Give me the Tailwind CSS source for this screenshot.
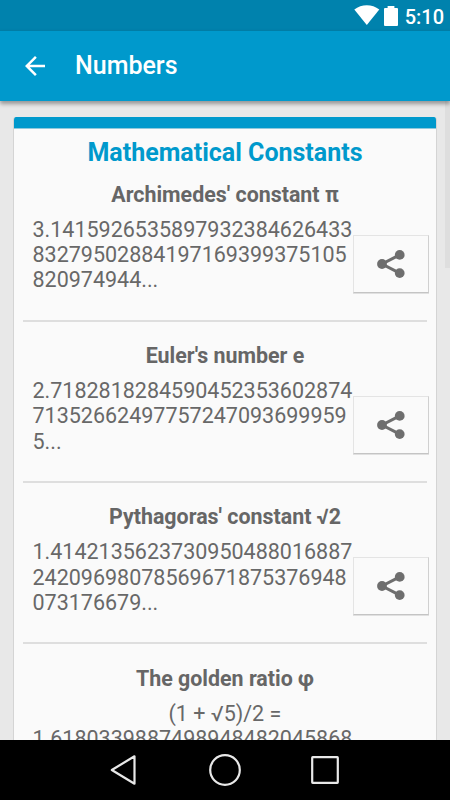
<!DOCTYPE html>
<html lang="en">
<head>
    <meta charset="UTF-8">
    <meta name="viewport" content="width=device-width, initial-scale=1.0">
    <title>Numbers</title>
    <script src="https://cdn.jsdelivr.net/npm/@tailwindcss/browser@4"></script>
</head>
<body class="bg-[#e8e8e8] font-[Roboto,sans-serif]">
    <div class="relative flex flex-col h-[800px] w-[450px] overflow-hidden">
        <!-- Status bar -->
        <div class="flex h-[30px] shrink-0 items-center justify-end bg-[#0082ad] pr-[6px] text-white">
            <svg class="mt-px h-[21px] w-[26px]" viewBox="0 0 26 21" fill="currentColor"><path d="M0.3 4.600C7.500-1.200 18.100-1.200 25.300 4.600L12.800 20Z"/></svg>
            <svg class="ml-[4px] mt-[2px] h-[20px] w-[14px]" viewBox="0 0 14 20" fill="currentColor"><path d="M3.600 0h6.800v2H13a1 1 0 0 1 1 1v16a1 1 0 0 1-1 1H1a1 1 0 0 1-1-1V3a1 1 0 0 1 1-1h2.600z"/></svg>
            <span class="ml-[7px] pt-[3px] text-[20px] font-medium leading-none">5:10</span>
        </div>

        <!-- Toolbar -->
        <header class="relative z-10 flex h-[71px] shrink-0 items-center border-t border-[#007da6] bg-[#0099cc] pl-[20px] text-white shadow-[0_3px_4px_rgba(0,0,0,0.35)]">
            <svg class="h-[30px] w-[30px]" viewBox="0 0 24 24" fill="currentColor"><path d="M20 11H7.830l5.590-5.590L12 4l-8 8 8 8 1.410-1.410L7.830 13H20v-2z"/></svg>
            <h1 class="ml-[25px] text-[25px] font-medium">Numbers</h1>
        </header>

        <main class="relative min-h-0 flex-1 overflow-hidden px-[13px] pt-[16px]">
            <div class="h-[900px] overflow-hidden rounded-t-[3px] border border-t-0 border-[#d4d4d4] bg-[#fafafa]">
                <div class="-mx-px h-[12px] border-b border-[#8fc9dc] bg-[#0099cc]"></div>
                <h2 class="mt-[9px] text-center text-[25px] font-bold leading-[30px] text-[#0099cc]">Mathematical Constants</h2>

                <section class="mx-[9px] mt-[14px] h-[139.700px] border-b-2 border-[#dedede]">
                    <h3 class="text-center text-[21.400px] font-bold leading-[25px] text-[#666]">Archimedes' constant π</h3>
                    <div class="mt-[10px] flex items-start pl-[9.500px]">
                        <p class="w-[320.500px] shrink-0 text-[21.500px] leading-[25.200px] text-[#686868]">3.1415926535897932384626433<br>83279502884197169399375105<br>820974944...</p>
                        <button type="button" aria-label="Share" class="mt-[18px] flex h-[58px] w-[76px] shrink-0 items-center justify-center border border-[#e4e4e4] border-r-[#d0d0d0] border-b-[#c4c4c4] bg-[#fafafa] text-[#6e6e6e] shadow-[0_1px_0_#e0e0e0]">
                            <svg class="h-[28px] w-[28px]" viewBox="0 0 28 28" fill="currentColor"><path d="M22.700 4.800 5 14l17.700 9.200" fill="none" stroke="currentColor" stroke-width="3"/><circle cx="5" cy="14" r="4.900"/><circle cx="22.700" cy="4.900" r="4.900"/><circle cx="22.700" cy="23.100" r="4.900"/></svg>
                        </button>
                    </div>
                </section>

                <section class="mx-[9px] mt-[21.600px] h-[139.700px] border-b-2 border-[#dedede]">
                    <h3 class="text-center text-[21.400px] font-bold leading-[25px] text-[#666]">Euler's number e</h3>
                    <div class="mt-[10px] flex items-start pl-[9.500px]">
                        <p class="w-[320.500px] shrink-0 text-[21.500px] leading-[25.200px] text-[#686868]">2.7182818284590452353602874<br>71352662497757247093699959<br>5...</p>
                        <button type="button" aria-label="Share" class="mt-[18px] flex h-[58px] w-[76px] shrink-0 items-center justify-center border border-[#e4e4e4] border-r-[#d0d0d0] border-b-[#c4c4c4] bg-[#fafafa] text-[#6e6e6e] shadow-[0_1px_0_#e0e0e0]">
                            <svg class="h-[28px] w-[28px]" viewBox="0 0 28 28" fill="currentColor"><path d="M22.700 4.800 5 14l17.700 9.200" fill="none" stroke="currentColor" stroke-width="3"/><circle cx="5" cy="14" r="4.900"/><circle cx="22.700" cy="4.900" r="4.900"/><circle cx="22.700" cy="23.100" r="4.900"/></svg>
                        </button>
                    </div>
                </section>

                <section class="mx-[9px] mt-[21.400px] h-[139.700px] border-b-2 border-[#dedede]">
                    <h3 class="text-center text-[21.400px] font-bold leading-[25px] text-[#666]">Pythagoras' constant √2</h3>
                    <div class="mt-[10px] flex items-start pl-[9.500px]">
                        <p class="w-[320.500px] shrink-0 text-[21.500px] leading-[25.200px] text-[#686868]">1.4142135623730950488016887<br>24209698078569671875376948<br>073176679...</p>
                        <button type="button" aria-label="Share" class="mt-[18px] flex h-[58px] w-[76px] shrink-0 items-center justify-center border border-[#e4e4e4] border-r-[#d0d0d0] border-b-[#c4c4c4] bg-[#fafafa] text-[#6e6e6e] shadow-[0_1px_0_#e0e0e0]">
                            <svg class="h-[28px] w-[28px]" viewBox="0 0 28 28" fill="currentColor"><path d="M22.700 4.800 5 14l17.700 9.200" fill="none" stroke="currentColor" stroke-width="3"/><circle cx="5" cy="14" r="4.900"/><circle cx="22.700" cy="4.900" r="4.900"/><circle cx="22.700" cy="23.100" r="4.900"/></svg>
                        </button>
                    </div>
                </section>

                <section class="mx-[9px] mt-[21.600px]">
                    <h3 class="text-center text-[21.400px] font-bold leading-[25px] text-[#666]">The golden ratio φ</h3>
                    <div class="mt-[10px] pl-[9.500px]">
                        <p class="w-[320.500px] indent-[136px] text-[21.500px] leading-[25.200px] text-[#686868]">(1 + √5)/2 =<br>1.6180339887498948482045868</p>
                    </div>
                </section>
            </div>

            <!-- Scrollbar -->
            <div class="absolute right-0 top-0 h-[167px] w-[5px] bg-[#dedede]"></div>
        </main>

        <!-- Navigation bar -->
        <nav class="flex h-[60px] shrink-0 items-center justify-center gap-[66px] bg-black text-[#e8e8e8]">
            <svg class="h-[36px] w-[36px]" viewBox="0 0 36 36" fill="none" stroke="currentColor" stroke-width="2.200" stroke-linejoin="round"><path d="M6.800 18 29.500 4.300v27.400Z"/></svg>
            <svg class="h-[36px] w-[36px]" viewBox="0 0 36 36" fill="none" stroke="currentColor" stroke-width="2.200"><circle cx="18" cy="18" r="14.800"/></svg>
            <svg class="h-[36px] w-[36px]" viewBox="0 0 36 36" fill="none" stroke="currentColor" stroke-width="2.200" stroke-linejoin="round"><rect x="3.200" y="5.200" width="25.600" height="25.600" rx="0.500"/></svg>
        </nav>
    </div>
</body>
</html>
